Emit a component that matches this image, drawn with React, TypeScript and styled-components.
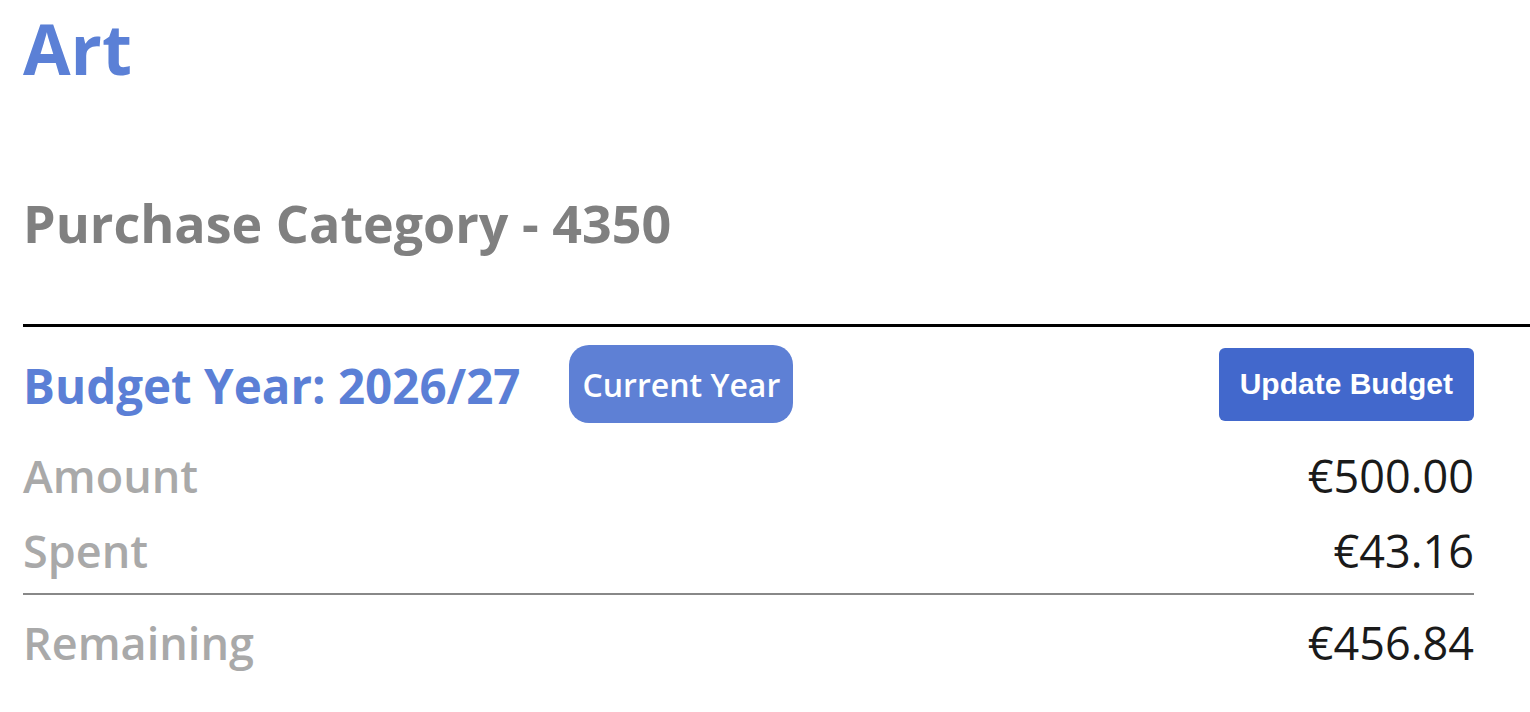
import React from "react";
import styled, { createGlobalStyle } from "styled-components";

const GlobalStyle = createGlobalStyle`
  html, body {
    margin: 0;
    padding: 0;
    background: #ffffff;
    overflow-x: hidden;
  }
  body {
    font-family: "Open Sans", "Noto Sans", sans-serif;
  }
`;

interface IBudgetLine {
  label: string;
  value: number;
}

const budget = {
  year: "2026/27",
  amount: 500,
  spent: 43.16,
};

const formatEuro = (value: number) => `€${value.toFixed(2)}`;

const Page = styled.div`
  padding: 0 0 40px 23px;
`;

const Title = styled.h1`
  margin: 14px 0 0;
  font-size: 69px;
  line-height: 1;
  font-weight: 700;
  color: #5b80d6;
`;

const CategoryTitle = styled.h2`
  margin: 114px 0 0;
  font-size: 52px;
  line-height: 1;
  font-weight: 700;
  color: #808080;
`;

const Divider = styled.div`
  margin-top: 75px;
  height: 3px;
  background: #000000;
`;

const Section = styled.section`
  margin-right: 56px;
`;

const YearBar = styled.div`
  display: flex;
  align-items: center;
  margin-top: 18px;
  height: 78px;
`;

const YearHeading = styled.h3`
  margin: 3px 49px 0 0;
  font-size: 47.5px;
  line-height: 1;
  font-weight: 700;
  color: #5b7fd6;
`;

const PillButton = styled.button`
  height: 78px;
  padding: 0 13px;
  border: none;
  border-radius: 20px;
  background: #5e80d5;
  color: #ffffff;
  font-family: "Open Sans", sans-serif;
  font-size: 32px;
  font-weight: 600;
  cursor: pointer;
`;

const PrimaryButton = styled.button`
  margin-left: auto;
  height: 73px;
  padding: 0 21px;
  border: none;
  border-radius: 6px;
  background: #4268cc;
  color: #ffffff;
  font-family: "Liberation Sans", Arial, sans-serif;
  font-size: 30px;
  font-weight: 700;
  cursor: pointer;
`;

const Rows = styled.div`
  margin-top: 15px;
`;

const Row = styled.div`
  display: flex;
  justify-content: space-between;
  font-size: 45px;
  line-height: 75px;
`;

const Label = styled.span`
  font-weight: 600;
  color: #a9a9a9;
`;

const Value = styled.span`
  font-weight: 400;
  color: #1a1a1a;
`;

const Total = styled.div`
  margin-top: 5px;
  padding-top: 10px;
  border-top: 2px solid #888888;
`;

const BudgetRow = ({ label, value }: IBudgetLine) => (
  <Row>
    <Label>{label}</Label>
    <Value>{formatEuro(value)}</Value>
  </Row>
);

export default function App() {
  const remaining = budget.amount - budget.spent;

  return (
    <Page>
      <GlobalStyle />
      <Title>Art</Title>
      <CategoryTitle>Purchase Category - 4350</CategoryTitle>
      <Divider />
      <Section>
        <YearBar>
          <YearHeading>Budget Year: {budget.year}</YearHeading>
          <PillButton>Current Year</PillButton>
          <PrimaryButton>Update Budget</PrimaryButton>
        </YearBar>
        <Rows>
          <BudgetRow label="Amount" value={budget.amount} />
          <BudgetRow label="Spent" value={budget.spent} />
          <Total>
            <BudgetRow label="Remaining" value={remaining} />
          </Total>
        </Rows>
      </Section>
    </Page>
  );
}
